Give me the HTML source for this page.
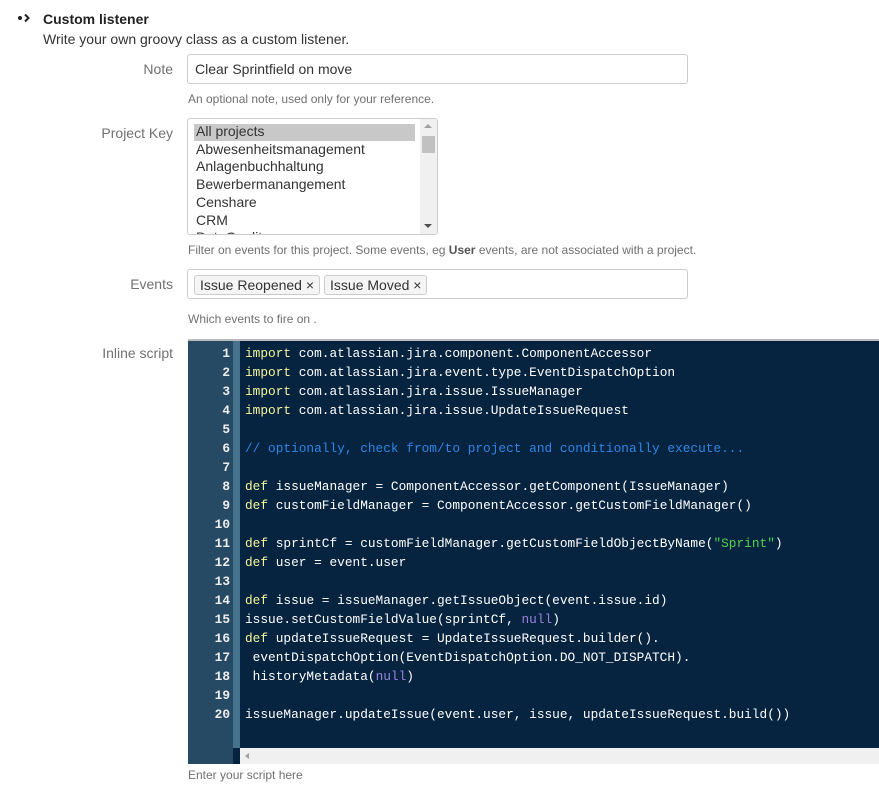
<!DOCTYPE html>
<html><head><meta charset="utf-8"><style>
body{margin:0;background:#fff;font-family:"Liberation Sans",Arial,sans-serif;color:#333;width:879px;height:789px;overflow:hidden;position:relative}
.a{position:absolute}
.lbl{position:absolute;right:706px;font-size:14px;color:#707070;text-align:right}
.help{position:absolute;left:188px;font-size:12px;color:#707070}
.inp{position:absolute;left:187px;border:1px solid #ccc;border-radius:3px;background:#fff;box-sizing:border-box}
.tag{display:inline-block;border:1px solid #ccc;border-radius:3px;background:#f5f5f5;padding:0 5px;font-size:14px;line-height:18px;margin-right:4px;color:#333}
.code{position:absolute;left:188px;top:339px;width:691px;height:425px;background:#06233f;border-top:2px solid #bbb;box-sizing:border-box;overflow:hidden}
.gut{position:absolute;left:0;top:0;width:45px;height:423px;background:#264a63}
.strip{position:absolute;left:45px;top:0;width:7px;height:407px;background:#45728c}
.ln{position:absolute;left:0;width:42px;text-align:right;font:bold 12.8px "Liberation Mono",monospace;color:#eee}
.cl{position:absolute;left:57px;font:12.8px "Liberation Mono",monospace;color:#fff;white-space:pre}
.k{color:#f5f59a}.c{color:#2f86e6}.n{color:#9a82de}.s{color:#4fd24f}
</style></head><body>
<svg class="a" style="left:17px;top:13px" width="16" height="10" viewBox="0 0 16 10"><circle cx="3" cy="5" r="2" fill="#222"/><path d="M8 1.5 L11.5 5 L8 8.5" stroke="#222" stroke-width="2" fill="none"/></svg>
<div class="a" style="left:43px;top:11px;font-size:14px;font-weight:bold;color:#222">Custom listener</div>
<div class="a" style="left:43px;top:31px;font-size:14px;color:#333">Write your own groovy class as a custom listener.</div>

<div class="lbl" style="top:61px">Note</div>
<div class="inp" style="top:54px;width:501px;height:30px;padding:6px 7px;font-size:14px">Clear Sprintfield on move</div>
<div class="help" style="top:92px">An optional note, used only for your reference.</div>

<div class="lbl" style="top:125px">Project Key</div>
<div class="inp" style="top:118px;width:251px;height:117px;overflow:hidden;font-size:14px;line-height:17.7px">
 <div style="position:absolute;left:6px;top:5px;width:221px;height:17px;background:#c8c8c8"></div>
 <div style="position:absolute;left:8px;top:4px">All projects<br>Abwesenheitsmanagement<br>Anlagenbuchhaltung<br>Bewerbermanangement<br>Censhare<br>CRM<br>DataQuality</div>
 <div style="position:absolute;right:0;top:0;width:17px;height:115px;background:#f0f0f0"></div>
 <div style="position:absolute;right:2px;top:17px;width:13px;height:17px;background:#c1c1c1"></div>
 <div style="position:absolute;right:5px;top:5px;width:0;height:0;border:4px solid transparent;border-bottom:4px solid #a0a0a0;border-top:0"></div>
 <div style="position:absolute;right:5px;bottom:6px;width:0;height:0;border:4px solid transparent;border-top:4px solid #505050;border-bottom:0"></div>
</div>
<div class="help" style="top:243px">Filter on events for this project. Some events, eg <b style="color:#555">User</b> events, are not associated with a project.</div>

<div class="lbl" style="top:276px">Events</div>
<div class="inp" style="top:269px;width:501px;height:30px;padding:5px 6px"><span class="tag">Issue Reopened ×</span><span class="tag">Issue Moved ×</span></div>
<div class="help" style="top:312px">Which events to fire on .</div>

<div class="lbl" style="top:345px">Inline script</div>
<div class="code">
<div class="gut"></div><div class="strip"></div>
<div style="position:absolute;left:52px;top:407px;width:640px;height:16px;background:#f0f0f0"></div>
<div style="position:absolute;left:57px;top:412px;width:0;height:0;border:3.5px solid transparent;border-right:4px solid #a0a0a0;border-left:0"></div>
<div class="ln" style="top:5px">1</div><div class="cl" style="top:5px"><span class="k">import</span> com.atlassian.jira.component.ComponentAccessor</div>
<div class="ln" style="top:24px">2</div><div class="cl" style="top:24px"><span class="k">import</span> com.atlassian.jira.event.type.EventDispatchOption</div>
<div class="ln" style="top:43px">3</div><div class="cl" style="top:43px"><span class="k">import</span> com.atlassian.jira.issue.IssueManager</div>
<div class="ln" style="top:62px">4</div><div class="cl" style="top:62px"><span class="k">import</span> com.atlassian.jira.issue.UpdateIssueRequest</div>
<div class="ln" style="top:81px">5</div>
<div class="ln" style="top:100px">6</div><div class="cl" style="top:100px"><span class="c">// optionally, check from/to project and conditionally execute...</span></div>
<div class="ln" style="top:119px">7</div>
<div class="ln" style="top:138px">8</div><div class="cl" style="top:138px"><span class="k">def</span> issueManager = ComponentAccessor.getComponent(IssueManager)</div>
<div class="ln" style="top:157px">9</div><div class="cl" style="top:157px"><span class="k">def</span> customFieldManager = ComponentAccessor.getCustomFieldManager()</div>
<div class="ln" style="top:176px">10</div>
<div class="ln" style="top:195px">11</div><div class="cl" style="top:195px"><span class="k">def</span> sprintCf = customFieldManager.getCustomFieldObjectByName(<span class="s">"Sprint"</span>)</div>
<div class="ln" style="top:214px">12</div><div class="cl" style="top:214px"><span class="k">def</span> user = event.user</div>
<div class="ln" style="top:233px">13</div>
<div class="ln" style="top:252px">14</div><div class="cl" style="top:252px"><span class="k">def</span> issue = issueManager.getIssueObject(event.issue.id)</div>
<div class="ln" style="top:271px">15</div><div class="cl" style="top:271px">issue.setCustomFieldValue(sprintCf, <span class="n">null</span>)</div>
<div class="ln" style="top:290px">16</div><div class="cl" style="top:290px"><span class="k">def</span> updateIssueRequest = UpdateIssueRequest.builder().</div>
<div class="ln" style="top:309px">17</div><div class="cl" style="top:309px"> eventDispatchOption(EventDispatchOption.DO_NOT_DISPATCH).</div>
<div class="ln" style="top:328px">18</div><div class="cl" style="top:328px"> historyMetadata(<span class="n">null</span>)</div>
<div class="ln" style="top:347px">19</div>
<div class="ln" style="top:366px">20</div><div class="cl" style="top:366px">issueManager.updateIssue(event.user, issue, updateIssueRequest.build())</div>
</div>
<div class="help" style="top:768px">Enter your script here</div>
</body></html>
